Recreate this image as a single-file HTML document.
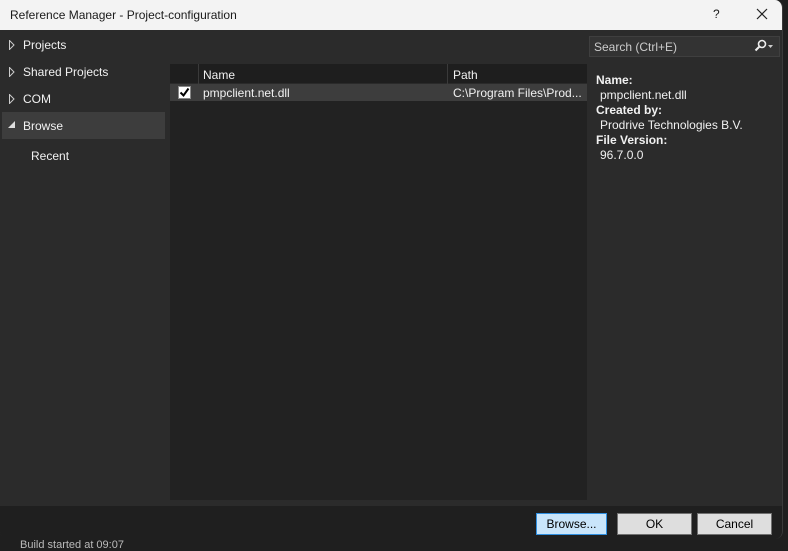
<!DOCTYPE html>
<html><head><meta charset="utf-8"><style>
*{margin:0;padding:0;box-sizing:border-box}
html,body{width:788px;height:543px}
body{background:#1f1f1f;font-family:"Liberation Sans",sans-serif;font-size:12px;color:#f1f1f1;position:relative;overflow:hidden}
.win{position:absolute;left:0;top:0;width:783px;height:539px;background:#2b2b2b;border-radius:0 8px 8px 8px;overflow:hidden;border-right:1px solid #3a3a3a}
.title{position:absolute;left:0;top:0;width:783px;height:30px;background:#f3f3f3;color:#1a1a1a}
.title span{position:absolute;left:10px;top:8px;font-size:12px}
.abs{position:absolute;white-space:nowrap}
.grid{position:absolute;left:170px;top:64px;width:417px;height:436px;background:#222222}
.bar{position:absolute;left:0;top:506px;width:783px;height:34px;background:#1f1f1f}
.btn{position:absolute;top:513px;height:22px;background:#dedede;border:1px solid #707070;color:#000;text-align:center;line-height:20px;font-size:12px}
</style></head><body>
<div class="abs" style="left:20px;top:539px;color:#bbb;font-size:11px">Build started at 09:07</div>
<div class="win">
<div class="title"><span>Reference Manager - Project-configuration</span>
<span style="left:713px;top:7px">?</span>
<svg style="position:absolute;left:756px;top:8px" width="12" height="12"><path d="M1 1L11 11M11 1L1 11" stroke="#222" stroke-width="1.2"/></svg>
</div>
<div class="abs" style="left:2px;top:112px;width:163px;height:27px;background:#3d3d3d"></div>
<svg style="position:absolute;left:9px;top:40px" width="6" height="10"><path d="M0.5 0.5L5 5L0.5 9.5Z" fill="none" stroke="#ccc"/></svg>
<svg style="position:absolute;left:9px;top:67px" width="6" height="10"><path d="M0.5 0.5L5 5L0.5 9.5Z" fill="none" stroke="#ccc"/></svg>
<svg style="position:absolute;left:9px;top:94px" width="6" height="10"><path d="M0.5 0.5L5 5L0.5 9.5Z" fill="none" stroke="#ccc"/></svg>
<svg style="position:absolute;left:8px;top:121px" width="8" height="8"><path d="M7 0L7 7L0 7Z" fill="#ddd"/></svg>
<div class="abs" style="left:23px;top:38px">Projects</div>
<div class="abs" style="left:23px;top:65px">Shared Projects</div>
<div class="abs" style="left:23px;top:92px">COM</div>
<div class="abs" style="left:23px;top:119px">Browse</div>
<div class="abs" style="left:31px;top:149px">Recent</div>
<div class="grid">
<div class="abs" style="left:0;top:0;width:417px;height:20px;background:#1e1e1e;border-bottom:1px solid #2a2a2a"></div>
<div class="abs" style="left:28px;top:0;width:1px;height:20px;background:#3a3a3a"></div>
<div class="abs" style="left:277px;top:0;width:1px;height:20px;background:#3a3a3a"></div>
<div class="abs" style="left:33px;top:4px">Name</div>
<div class="abs" style="left:283px;top:4px">Path</div>
<div class="abs" style="left:0;top:20px;width:417px;height:17px;background:#3d3d3d"></div>
<div class="abs" style="left:8px;top:22px;width:13px;height:13px;background:#fff;border:1px solid #888"></div>
<svg style="position:absolute;left:9px;top:23px" width="11" height="11"><path d="M1.5 5.5L4.5 8.5L9.5 1.5" fill="none" stroke="#000" stroke-width="2"/></svg>
<div class="abs" style="left:33px;top:22px">pmpclient.net.dll</div>
<div class="abs" style="left:283px;top:22px">C:\Program Files\Prod...</div>
</div>
<div class="abs" style="left:589px;top:36px;width:191px;height:21px;background:#333;border:1px solid #3f3f3f"></div>
<div class="abs" style="left:594px;top:40px;color:#ccc">Search (Ctrl+E)</div>
<svg style="position:absolute;left:753px;top:39px" width="24" height="14"><circle cx="9" cy="5" r="3.5" fill="none" stroke="#eee" stroke-width="1.6"/><path d="M6.5 7.5L2.5 11.5" stroke="#eee" stroke-width="2"/><path d="M15 6L20 6L17.5 9Z" fill="#ccc"/></svg>
<div class="abs" style="left:596px;top:73px;font-weight:bold">Name:</div>
<div class="abs" style="left:600px;top:88px">pmpclient.net.dll</div>
<div class="abs" style="left:596px;top:103px;font-weight:bold">Created by:</div>
<div class="abs" style="left:600px;top:118px">Prodrive Technologies B.V.</div>
<div class="abs" style="left:596px;top:133px;font-weight:bold">File Version:</div>
<div class="abs" style="left:600px;top:148px">96.7.0.0</div>
<div class="bar"></div>
<div class="btn" style="left:536px;width:71px;background:#c9e5fa;border-color:#2f8fe0">Browse...</div>
<div class="btn" style="left:617px;width:75px">OK</div>
<div class="btn" style="left:697px;width:75px">Cancel</div>
</div>
</body></html>
